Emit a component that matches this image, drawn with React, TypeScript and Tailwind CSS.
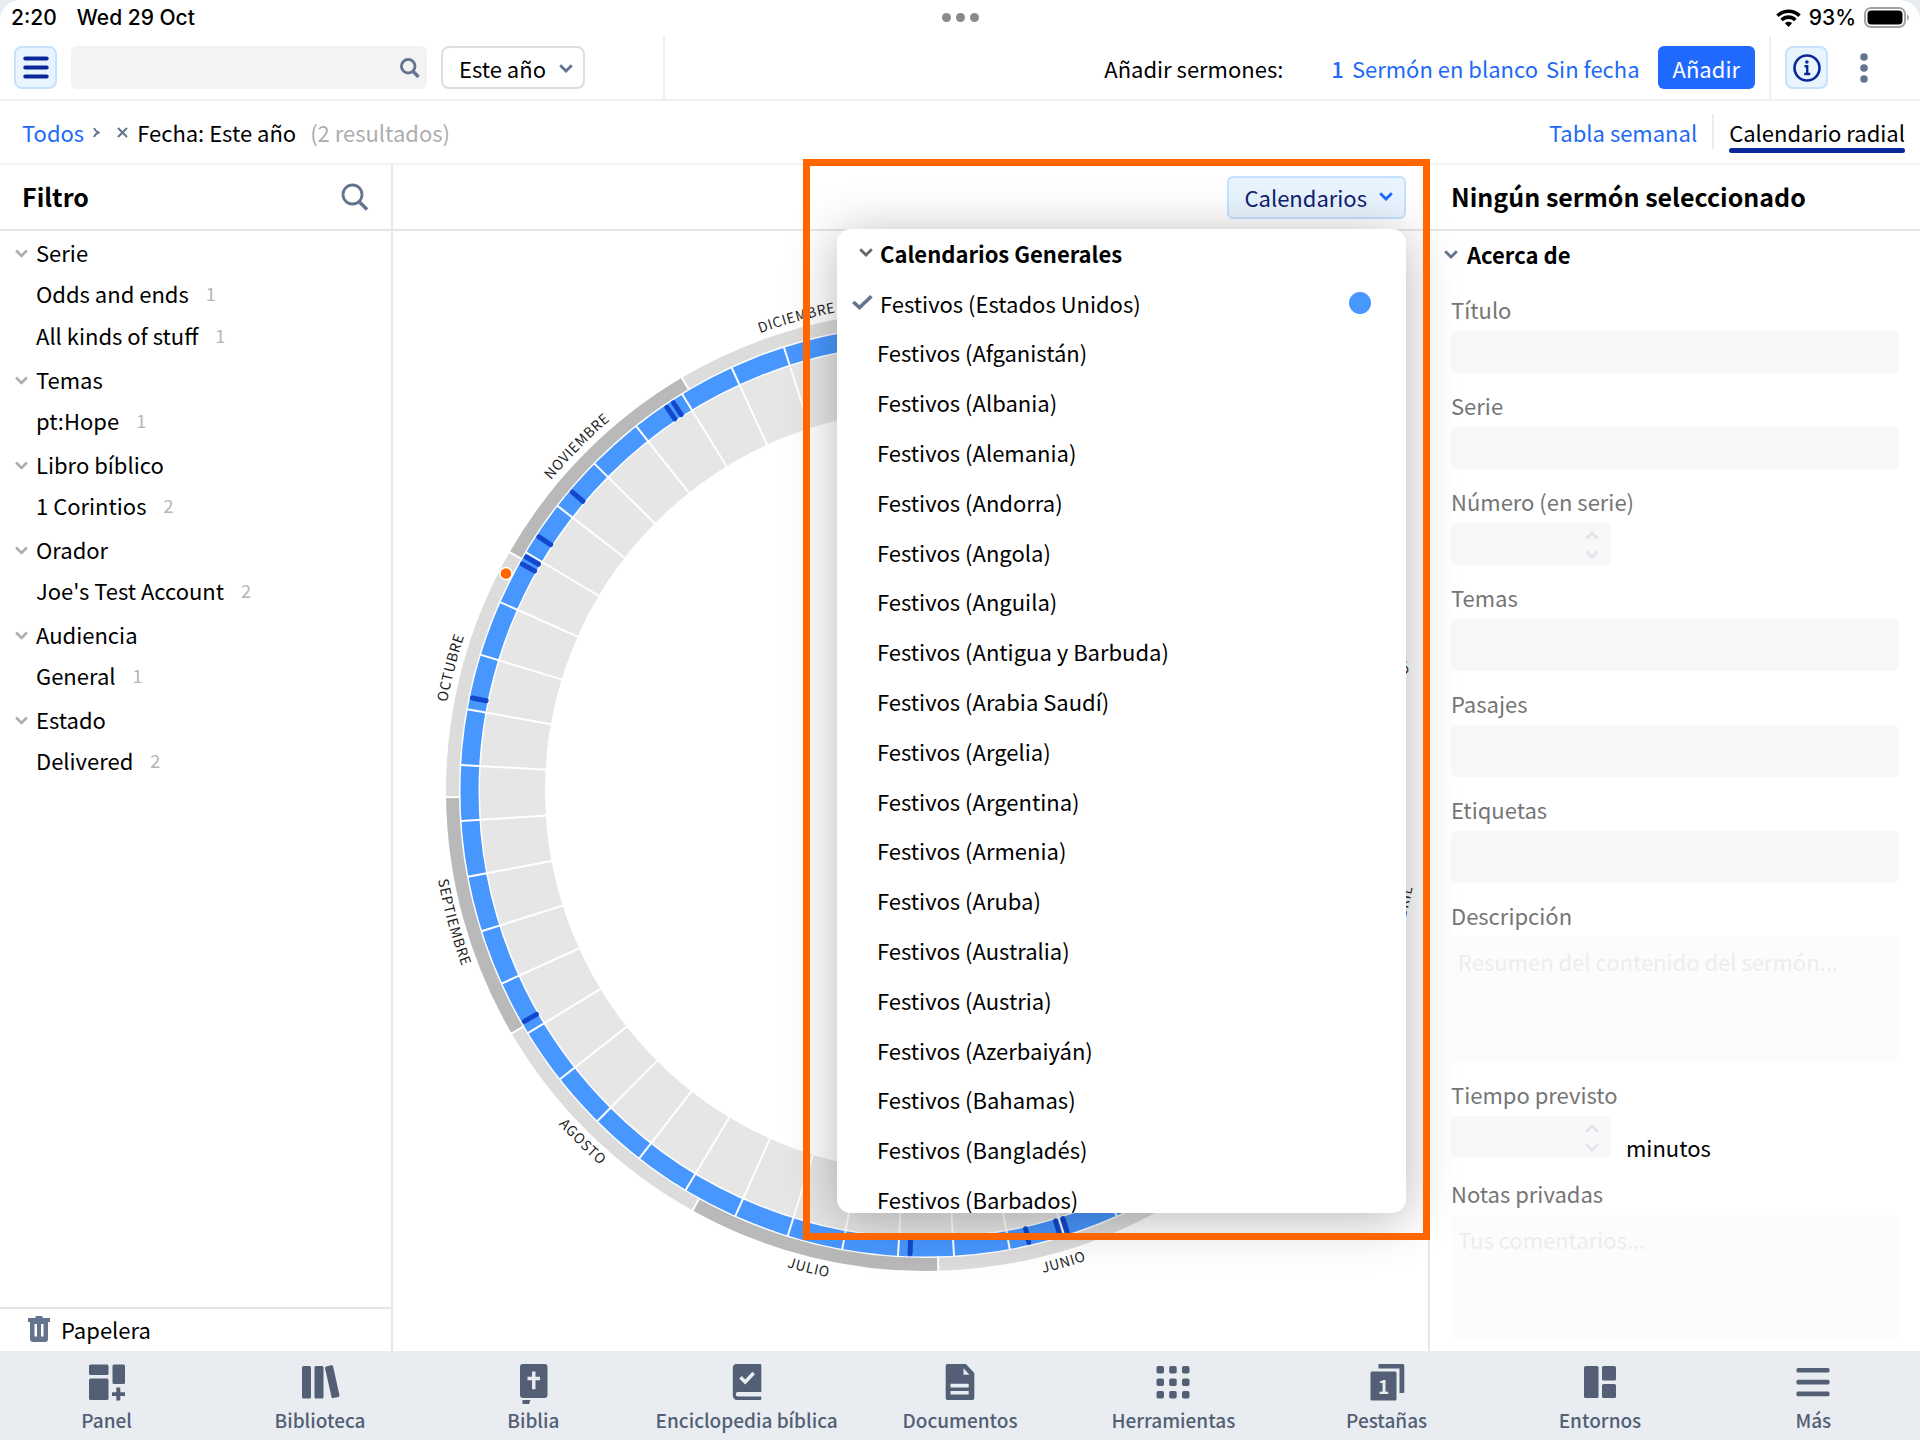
import type { ReactNode } from 'react'
import clsx from 'clsx'

const filterGroups = [
  {
    title: 'Serie',
    items: [
      { label: 'Odds and ends', count: 1 },
      { label: 'All kinds of stuff', count: 1 },
    ],
  },
  { title: 'Temas', items: [{ label: 'pt:Hope', count: 1 }] },
  { title: 'Libro bíblico', items: [{ label: '1 Corintios', count: 2 }] },
  { title: 'Orador', items: [{ label: "Joe's Test Account", count: 2 }] },
  { title: 'Audiencia', items: [{ label: 'General', count: 1 }] },
  { title: 'Estado', items: [{ label: 'Delivered', count: 2 }] },
]

const countries = [
  'Afganistán',
  'Albania',
  'Alemania',
  'Andorra',
  'Angola',
  'Anguila',
  'Antigua y Barbuda',
  'Arabia Saudí',
  'Argelia',
  'Argentina',
  'Armenia',
  'Aruba',
  'Australia',
  'Austria',
  'Azerbaiyán',
  'Bahamas',
  'Bangladés',
  'Barbados',
]

const months = [
  { name: 'ENERO', days: 31 },
  { name: 'FEBRERO', days: 28 },
  { name: 'MARZO', days: 31 },
  { name: 'ABRIL', days: 30 },
  { name: 'MAYO', days: 31 },
  { name: 'JUNIO', days: 30 },
  { name: 'JULIO', days: 31 },
  { name: 'AGOSTO', days: 31 },
  { name: 'SEPTIEMBRE', days: 30 },
  { name: 'OCTUBRE', days: 31 },
  { name: 'NOVIEMBRE', days: 30 },
  { name: 'DICIEMBRE', days: 31 },
]

// Day of the year, counted from 0
const holidays = [164, 165, 169, 184, 243, 285, 303, 304, 307, 314, 330, 331]
const today = 301
const firstSunday = 4
const center = 500

export default function App() {
  return (
    <div className="flex min-h-screen flex-col bg-[#e9ecf1] font-['Noto_Sans_CJK_JP','Noto_Sans',sans-serif] text-[22px] leading-8 text-black">
      <div className="flex flex-1 flex-col rounded-t-[20px] bg-white">
        <StatusBar />
        <Toolbar />
        <Breadcrumbs />
        <div className="flex flex-1">
          <FilterPanel />
          <CalendarPanel />
          <DetailsPanel />
        </div>
      </div>
      <BottomNav />
    </div>
  )
}

function StatusBar() {
  return (
    <div className="grid h-9 grid-cols-3 items-center pb-px pl-[11px] pr-[10px] font-['Inter',sans-serif] text-[21px] font-medium leading-6">
      <div className="flex gap-5">
        <span>2:20</span>
        <span>Wed 29 Oct</span>
      </div>
      <div className="flex justify-center gap-[5px]">
        <span className="size-[9px] rounded-full bg-[#8a8a8a]" />
        <span className="size-[9px] rounded-full bg-[#8a8a8a]" />
        <span className="size-[9px] rounded-full bg-[#8a8a8a]" />
      </div>
      <div className="flex items-center justify-end gap-2">
        <svg className="h-[18px] w-[25px]" viewBox="0 0 25 18" fill="none" stroke="currentColor" strokeWidth="3.6">
          <path d="M1.5 6.8a15.6 15.6 0 0 1 22 0" />
          <path d="M5.6 11a9.8 9.8 0 0 1 13.8 0" />
          <path d="M12.5 18l-3.6-3.7a5.1 5.1 0 0 1 7.2 0z" fill="currentColor" stroke="none" />
        </svg>
        <span>93%</span>
        <svg className="h-[21px] w-[46px]" viewBox="0 0 46 21">
          <rect x="1" y="1" width="40" height="19" rx="6" fill="none" stroke="#a3a3a3" strokeWidth="2" />
          <rect x="3.5" y="3.5" width="35" height="14" rx="4" />
          <path d="M43 7.5c2.6.8 2.6 5.2 0 6z" fill="#a3a3a3" />
        </svg>
      </div>
    </div>
  )
}

function Toolbar() {
  return (
    <header className="flex h-[65px] items-stretch border-b-2 border-[#f0f0f0] pl-[14px]">
      <div className="flex max-w-[651px] flex-1 items-center border-r-2 border-[#f0f0f0] py-2 pr-3">
        <button
          type="button"
          aria-label="Menú"
          className="grid size-[43px] place-items-center rounded-lg border-2 border-[#c4e1fd] bg-[#e8f4fe]"
        >
          <svg className="h-[29px] w-[26px]" viewBox="0 0 26 29" stroke="#0a2899" strokeWidth="3.8" strokeLinecap="round">
            <path d="M2.2 5.5h21.6M2.2 14.5h21.6M2.2 23.5h21.6" />
          </svg>
        </button>
        <div className="relative ml-[14px] max-w-[356px] flex-1">
          <input
            type="search"
            aria-label="Buscar"
            className="block h-[43px] w-full rounded-md bg-[#f3f3f3] pl-3 pr-10 outline-none"
          />
          <SearchIcon className="absolute right-[7px] top-3 size-5" width={4} />
        </div>
        <div className="relative ml-[14px]">
          <select
            aria-label="Fecha"
            className="block h-[43px] w-[144px] appearance-none rounded-lg border-2 border-[#dedede] bg-white pl-4 pr-8 leading-8"
          >
            <option>Este año</option>
          </select>
          <Chevron className="pointer-events-none absolute right-3 top-[18px] h-[9px] w-[14px] text-[#64748f]" />
        </div>
      </div>
      <div className="flex flex-1 items-center justify-end border-r-2 border-[#f0f0f0] pr-[14px]">
        <span className="mr-12">Añadir sermones:</span>
        <a href="#cantidad" className="mr-2 font-medium text-[#2169f7]">
          1
        </a>
        <a href="#sermon" className="mr-2 text-[#2169f7]">
          Sermón en blanco
        </a>
        <a href="#fecha" className="mr-[18px] text-[#2169f7]">
          Sin fecha
        </a>
        <button type="button" className="h-[43px] rounded-md bg-[#1f69ff] px-[15px] text-white">
          Añadir
        </button>
      </div>
      <div className="flex w-[149px] items-center pl-[14px]">
        <button
          type="button"
          aria-label="Información"
          className="grid size-[43px] place-items-center rounded-lg border-2 border-[#c4e1fd] bg-[#e8f4fe]"
        >
          <svg className="size-7" viewBox="0 0 28 28" fill="none" stroke="#0a2899" strokeWidth="2.6">
            <circle cx="14" cy="14" r="12.5" />
            <path d="M11.5 12.3h2.7v8M11.2 20h6" strokeWidth="2.4" />
            <circle cx="13.9" cy="8" r="1.8" fill="#0a2899" stroke="none" />
          </svg>
        </button>
        <button type="button" aria-label="Más opciones" className="ml-7 grid h-[43px] w-4 place-items-center">
          <svg className="h-[30px] w-2" viewBox="0 0 8 30" fill="#64748f">
            <circle cx="4" cy="4" r="3.8" />
            <circle cx="4" cy="15" r="3.8" />
            <circle cx="4" cy="26" r="3.8" />
          </svg>
        </button>
      </div>
    </header>
  )
}

function Breadcrumbs() {
  return (
    <nav className="flex h-16 items-center justify-between border-b-2 border-[#f3f3f3] pb-px pl-[22px] pr-[15px]">
      <div className="flex items-center">
        <a href="#todos" className="text-[#2169f7]">
          Todos
        </a>
        <svg className="ml-[9px] mt-px h-[11px] w-[7px]" viewBox="0 0 7 11" fill="none" stroke="#64748f" strokeWidth="2">
          <path d="M1 1c1 2.5 2.5 3.8 4.3 4.5C3.5 6.2 2 7.5 1 10" />
        </svg>
        <button type="button" aria-label="Quitar filtro" className="ml-4 grid h-8 w-3 place-items-center pt-px">
          <svg className="size-[11px]" viewBox="0 0 11 11" stroke="#64748f" strokeWidth="2">
            <path d="M1 1l9 9M10 1l-9 9" />
          </svg>
        </button>
        <span className="ml-[9px]">Fecha: Este año</span>
        <span className="ml-[14px] text-[#adadad]">(2 resultados)</span>
      </div>
      <div className="flex items-center">
        <a href="#tabla" className="text-[#2169f7]">
          Tabla semanal
        </a>
        <span className="mx-[15px] h-[35px] w-[2px] bg-[#ececec]" />
        <a href="#radial" className="relative">
          Calendario radial
          <span className="absolute inset-x-0 top-full h-[5px] rounded-full bg-[#0a2899]" />
        </a>
      </div>
    </nav>
  )
}

function PanelHeader({ children, className }: { children: ReactNode; className?: string }) {
  return (
    <div className={clsx('flex h-[66px] items-center justify-between border-b-2 border-[#e6e6e6]', className)}>
      {children}
    </div>
  )
}

function FilterPanel() {
  return (
    <aside className="flex w-[393px] shrink-0 flex-col border-r-2 border-[#e6e6e6]">
      <PanelHeader className="px-[22px]">
        <h2 className="pb-[3px] text-[25px] font-bold">Filtro</h2>
        <button type="button" aria-label="Buscar filtros">
          <SearchIcon className="size-7" width={2.8} />
        </button>
      </PanelHeader>
      <div className="flex-1 pt-px">
        {filterGroups.map((group) => (
          <section key={group.title} className="pb-[3px]">
            <h3>
              <button type="button" className="flex h-10 items-center pl-[15px]">
                <Chevron className="mr-2 mt-[2px] h-[9px] w-[13px] text-[#adadad]" />
                {group.title}
              </button>
            </h3>
            <ul>
              {group.items.map((item) => (
                <li key={item.label}>
                  <a href="#filtro" className="flex h-[42px] items-center gap-[17px] pl-9">
                    {item.label}
                    <span className="text-[18px] text-[#b5b5b5]">{item.count}</span>
                  </a>
                </li>
              ))}
            </ul>
          </section>
        ))}
      </div>
      <button type="button" className="flex h-11 items-center border-t-2 border-[#e6e6e6] pb-[2px] pl-7">
        <svg className="mr-[11px] h-[26px] w-[22px]" viewBox="0 0 22 26" fill="#64748f">
          <path d="M0 2h7l1-2h6l1 2h7v4H0z" />
          <path
            fillRule="evenodd"
            d="M2 6h18v17a3 3 0 0 1-3 3H5a3 3 0 0 1-3-3zM6.5 8v12.5h2.5V8zM13 8v12.5h2.5V8z"
          />
        </svg>
        Papelera
      </button>
    </aside>
  )
}

function CalendarPanel() {
  return (
    <main className="relative min-w-0 flex-1">
      <PanelHeader className="pr-[22px]">
        <button
          type="button"
          aria-expanded="true"
          className="ml-auto flex h-[43px] items-center rounded-md border-2 border-[#c4e1fd] bg-[#e8f4fe] pb-px pl-[15px] pr-[11px] text-[#10206f]"
        >
          Calendarios
          <Chevron className="ml-3 h-[9px] w-[14px] text-[#1f69ff]" />
        </button>
      </PanelHeader>
      <div className="flex min-h-[1120px] items-center justify-center pl-[30px]">
        <RadialCalendar />
      </div>
      <CalendarMenu />
      <div className="pointer-events-none absolute -right-[2px] -top-[6px] z-20 h-[1081px] w-[627px] border-[7px] border-[#ff6600]" />
    </main>
  )
}

function CalendarMenu() {
  return (
    <div className="absolute right-[22px] top-16 z-10 h-[984px] w-[569px] overflow-hidden rounded-[14px] bg-white shadow-[0_6px_52px_rgba(0,0,0,0.28)]">
      <ul className="flex h-[996px] flex-col">
        <li className="flex flex-1 items-center pb-[2px] pl-[22px] font-bold">
          <Chevron className="mr-[7px] h-[9px] w-[14px] text-[#64676d]" />
          Calendarios Generales
        </li>
        <li className="flex flex-1 items-center pb-[2px] pl-[15px] pr-[35px]">
          <svg className="mr-[7px] h-[15px] w-[21px]" viewBox="0 0 21 15" fill="none" stroke="#64748f" strokeWidth="3.6">
            <path d="M1.3 7l6.2 5.5L19.5 1.3" />
          </svg>
          <span className="flex-1">Festivos (Estados Unidos)</span>
          <span className="size-[22px] rounded-full bg-[#4897ff]" />
        </li>
        {countries.map((country) => (
          <li key={country} className="flex flex-1 items-center pb-[2px] pl-10">
            Festivos ({country})
          </li>
        ))}
      </ul>
    </div>
  )
}

function polar(day: number, radius: number) {
  const angle = (day / 365) * Math.PI * 2
  return [center + radius * Math.sin(angle), center - radius * Math.cos(angle)]
}

function arc(from: number, to: number, radius: number) {
  const [x1, y1] = polar(from, radius)
  const [x2, y2] = polar(to, radius)
  return `M${x1} ${y1}A${radius} ${radius} 0 0 ${to > from ? 1 : 0} ${x2} ${y2}`
}

function Spoke({ day, inner, outer, color, width }: { day: number; inner: number; outer: number; color: string; width: number }) {
  const [x1, y1] = polar(day, inner)
  const [x2, y2] = polar(day, outer)
  return <line x1={x1} y1={y1} x2={x2} y2={y2} stroke={color} strokeWidth={width} />
}

function RadialCalendar() {
  let start = 0
  const spans = months.map((month) => {
    const span = { ...month, start, end: start + month.days }
    start = span.end
    return span
  })
  const weeks = Array.from({ length: 52 }, (_, week) => firstSunday + week * 7)
  const [todayX, todayY] = polar(today + 0.5, 473)

  return (
    <svg className="size-[1000px] shrink-0" viewBox="0 0 1000 1000" fill="none">
      <circle cx={center} cy={center} r="413.5" stroke="#e6e6e6" strokeWidth="65" />
      <circle cx={center} cy={center} r="456.5" stroke="#4897ff" strokeWidth="18" />
      {spans.map((span, i) => (
        <path key={span.name} d={arc(span.start, span.end, 473.5)} stroke={i % 2 ? '#dcdcdc' : '#b9b9b9'} strokeWidth="13" />
      ))}
      {spans.map((span) => (
        <Spoke key={span.name} day={span.start} inner={466} outer={481} color="#fff" width={2} />
      ))}
      {weeks.map((day) => (
        <Spoke key={day} day={day} inner={378} outer={466} color="#fff" width={2} />
      ))}
      {holidays.map((day) => {
        const [x1, y1] = polar(day + 0.5, 449)
        const [x2, y2] = polar(day + 0.5, 463)
        return <line key={day} x1={x1} y1={y1} x2={x2} y2={y2} stroke="#1348cc" strokeWidth="5" strokeLinecap="round" />
      })}
      <circle cx={todayX} cy={todayY} r="6" fill="#ff6600" stroke="#fff" strokeWidth="1.5" />
      {spans.map((span) => {
        const middle = (span.start + span.end) / 2
        const lower = middle > 91 && middle < 273
        const path = lower ? arc(middle + 30, middle - 30, 496) : arc(middle - 30, middle + 30, 487)
        return (
          <g key={span.name}>
            <path id={`arc-${span.name}`} d={path} />
            <text className="text-[14px] tracking-wider" fill="#1f1f1f" textAnchor="middle">
              <textPath href={`#arc-${span.name}`} startOffset="50%">
                {span.name}
              </textPath>
            </text>
          </g>
        )
      })}
    </svg>
  )
}

function DetailsPanel() {
  return (
    <aside className="w-[492px] shrink-0 border-l-2 border-[#e6e6e6]">
      <PanelHeader className="pl-[21px]">
        <h2 className="pb-[3px] text-[25px] font-bold">Ningún sermón seleccionado</h2>
      </PanelHeader>
      <form>
        <h3 className="flex h-[46px] items-center pl-[14px] font-bold">
          <Chevron className="mr-[9px] h-[9px] w-[14px] text-[#64748f]" />
          Acerca de
        </h3>
        <div className="px-[21px]">
          <TextField id="titulo" label="Título" />
          <TextField id="serie" label="Serie" />
          <Field id="numero" label="Número (en serie)">
            <NumberInput id="numero" />
          </Field>
          <TextField id="temas" label="Temas" tall />
          <TextField id="pasajes" label="Pasajes" tall />
          <TextField id="etiquetas" label="Etiquetas" tall />
          <Field id="descripcion" label="Descripción">
            <NoteArea id="descripcion" placeholder="Resumen del contenido del sermón..." />
          </Field>
          <Field id="tiempo" label="Tiempo previsto">
            <div className="flex h-[45px] items-start gap-[15px]">
              <NumberInput id="tiempo" />
              <span className="-mb-[2px] self-end">minutos</span>
            </div>
          </Field>
          <Field id="notas" label="Notas privadas">
            <NoteArea id="notas" placeholder="Tus comentarios..." />
          </Field>
        </div>
      </form>
    </aside>
  )
}

function Field({ id, label, children }: { id: string; label: string; children: ReactNode }) {
  return (
    <div>
      <label htmlFor={id} className="flex h-[54px] items-end pb-[6px] text-[#757575]">
        {label}
      </label>
      {children}
    </div>
  )
}

function TextField({ id, label, tall = false }: { id: string; label: string; tall?: boolean }) {
  return (
    <Field id={id} label={label}>
      <input id={id} disabled className={clsx('block w-full rounded-md bg-[#f8f8f8] px-2', tall ? 'h-[52px]' : 'h-[42px]')} />
    </Field>
  )
}

function NumberInput({ id }: { id: string }) {
  return (
    <div className="relative w-40">
      <input id={id} disabled inputMode="numeric" className="block h-[42px] w-full rounded-md bg-[#f8f8f8] px-2" />
      <Chevron className="absolute right-3 top-2 h-[9px] w-[14px] rotate-180 text-[#e0e4ed]" />
      <Chevron className="absolute bottom-[6px] right-3 h-[9px] w-[14px] text-[#e0e4ed]" />
    </div>
  )
}

function NoteArea({ id, placeholder }: { id: string; placeholder: string }) {
  return (
    <textarea
      id={id}
      disabled
      placeholder={placeholder}
      className="block h-[125px] w-full resize-none rounded-md bg-[#fcfcfc] px-[7px] py-2 placeholder:text-[#ededed]"
    />
  )
}

function BottomNav() {
  return (
    <nav className="grid h-[89px] grid-cols-9 text-[19px] font-medium leading-6 text-[#525f75]">
      <NavItem label="Panel">
        <rect x="2" y="2.5" width="19.5" height="10.5" rx="1.5" />
        <rect x="2" y="16.5" width="19.5" height="21.5" rx="1.5" />
        <rect x="25.5" y="2.5" width="12.5" height="19.5" rx="1.5" />
        <path d="M29.3 25.5h4v4.7h4.7v3.8h-4.7v4.5h-4V34h-4.3v-3.8h4.3z" />
      </NavItem>
      <NavItem label="Biblioteca">
        <rect x="2" y="4" width="9" height="32.5" rx="1.5" />
        <rect x="14.5" y="4" width="9" height="32.5" rx="1.5" />
        <path d="M26.2 4.6l5-1.3a1.5 1.5 0 0 1 1.9 1.2l6.3 28.6a1.5 1.5 0 0 1-1.1 1.8l-5 1.2a1.5 1.5 0 0 1-1.8-1.1L25.1 6.4a1.5 1.5 0 0 1 1.1-1.8z" />
      </NavItem>
      <NavItem label="Biblia">
        <rect x="7" y="2" width="27.5" height="34" rx="3" />
        <path d="M9.5 38h8l-1.5 4H9.5z" />
        <path d="M19 9.5h3.5v5.2H27v3.5h-4.5v9H19v-9h-4.5v-3.5H19z" fill="#e9ecf1" />
      </NavItem>
      <NavItem label="Enciclopedia bíblica">
        <path d="M9.5 2H33a1.3 1.3 0 0 1 1.3 1.3V30H11a1.8 1.8 0 0 0 0 4.5h23.3V37a1 1 0 0 1-1 1H10a4.2 4.2 0 0 1-4.2-4.2V5.5A3.5 3.5 0 0 1 9.5 2z" />
        <path d="M13.5 15.2l4.7 4.8 8.5-9" fill="none" stroke="#e9ecf1" strokeWidth="3.6" />
      </NavItem>
      <NavItem label="Documentos">
        <path d="M7.5 2h18.3L34.3 11v25.2a1.8 1.8 0 0 1-1.8 1.8h-25a1.8 1.8 0 0 1-1.8-1.8V3.8A1.8 1.8 0 0 1 7.5 2z" />
        <path d="M23.5 6.2v6.5h6zM10.5 21.8h18.2v3.6H10.5zM10.5 29h18.2v3.6H10.5z" fill="#e9ecf1" />
      </NavItem>
      <NavItem label="Herramientas">
        {[4, 16.5, 29].map((y) =>
          [3.5, 16.2, 29].map((x) => <rect key={`${x}-${y}`} x={x} y={y} width="7.5" height="7.5" rx="1.8" />),
        )}
      </NavItem>
      <NavItem label="Pestañas">
        <rect x="3.5" y="9.5" width="26" height="29" rx="1.5" />
        <path d="M11.5 2h24a1.8 1.8 0 0 1 1.8 1.8V30a1 1 0 0 1-1 1h-3.8V6.6h-21z" />
        <text x="16.5" y="31.5" textAnchor="middle" fill="#e9ecf1" className="text-[19px] font-bold">
          1
        </text>
      </NavItem>
      <NavItem label="Entornos">
        <rect x="4" y="4" width="14.5" height="32" rx="1.5" />
        <rect x="22" y="4" width="14" height="14.5" rx="1.5" />
        <rect x="22" y="22" width="14" height="14" rx="1.5" />
      </NavItem>
      <NavItem label="Más">
        <rect x="3.5" y="6" width="33" height="4.6" rx="1.5" />
        <rect x="3.5" y="17.8" width="33" height="4.6" rx="1.5" />
        <rect x="3.5" y="29.6" width="33" height="4.6" rx="1.5" />
      </NavItem>
    </nav>
  )
}

function NavItem({ label, children }: { label: string; children: ReactNode }) {
  return (
    <a href="#nav" className="flex flex-col items-center pt-[11px]">
      <svg className="h-11 w-10" viewBox="0 0 40 44" fill="currentColor">
        {children}
      </svg>
      <span className="mt-[2px] whitespace-nowrap">{label}</span>
    </a>
  )
}

function SearchIcon({ className, width }: { className?: string; width: number }) {
  return (
    <svg className={className} viewBox="0 0 28 28" fill="none" stroke="#64748f" strokeWidth={width}>
      <circle cx="11.5" cy="11.5" r="9.5" />
      <path d="M18 18.5l8 8" strokeWidth={width + 0.8} />
    </svg>
  )
}

function Chevron({ className }: { className?: string }) {
  return (
    <svg className={className} viewBox="0 0 14 9" fill="none" stroke="currentColor" strokeWidth="2.8">
      <path d="M1.2 1.3L7 7l5.8-5.7" />
    </svg>
  )
}
